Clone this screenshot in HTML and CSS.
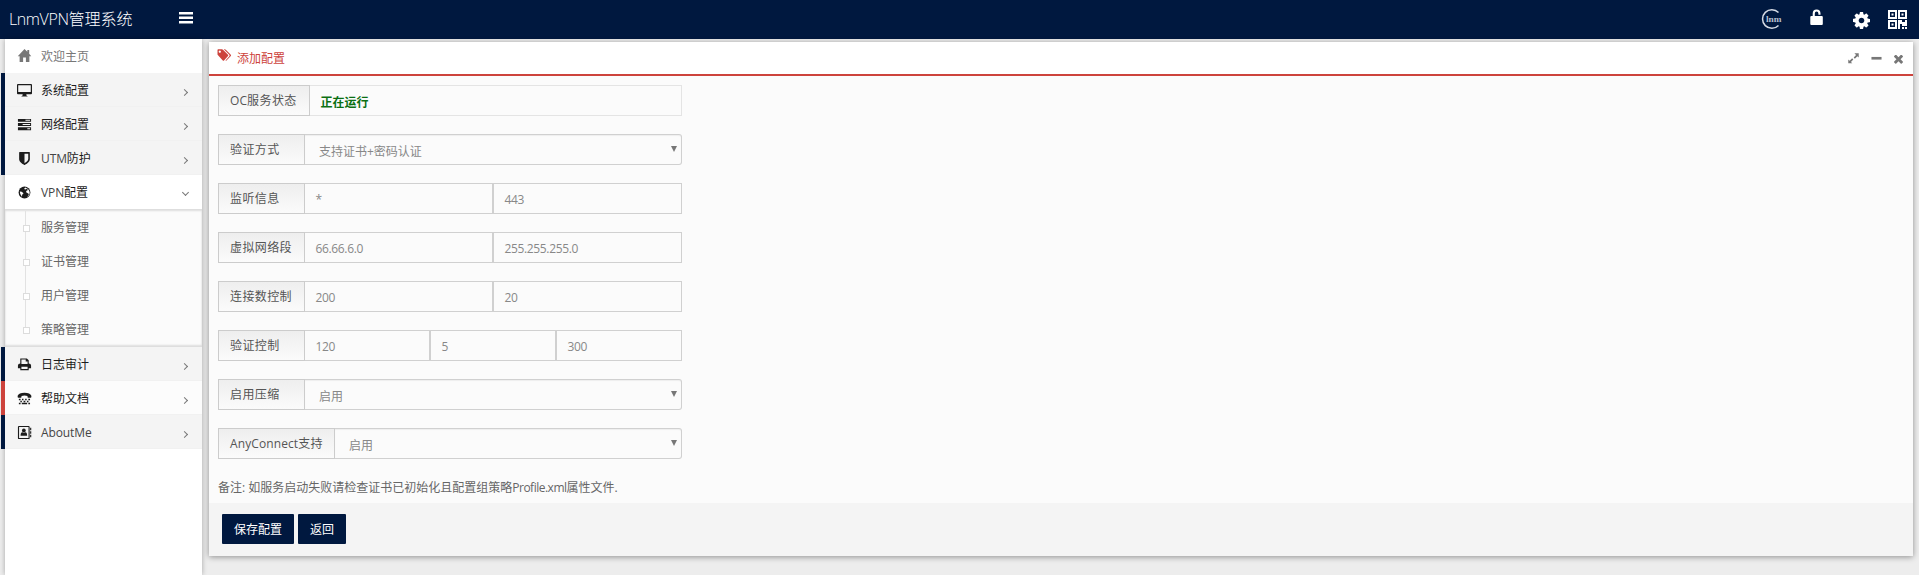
FILE: index.html
```html
<!DOCTYPE html>
<html lang="zh-CN">
<head>
<meta charset="utf-8">
<title>LnmVPN管理系统</title>
<link rel="stylesheet" href="styles.css">
</head>
<body>
<header class="topbar">
  <div class="brand"><span class="brand-latin">LnmVPN</span>管理系统</div>
  <svg class="bars" viewBox="0 0 14 12"><path d="M0 0h14v2.600H0zM0 4.500h14v2.600H0zM0 9h14v2.600H0z"/></svg>
  <nav class="tools">
    <svg class="logo" viewBox="0 0 20 20"><path d="M16.500 3.500A9.300 9.300 0 1 0 16.500 16.500" fill="none" stroke="#d5dae4" stroke-width="1.500"/><text class="logo-text" x="4" y="13" textLength="15.500" lengthAdjust="spacingAndGlyphs">lnm</text></svg>
    <svg class="lock" viewBox="0 0 13 16"><path d="M1.300 7h1.400V4.400a3.900 3.900 0 0 1 7.800 0v1.400H8.400V4.400a1.800 1.800 0 0 0-3.600 0V7h7q1 0 1 1v7q0 1-1 1H1.300q-1 0-1-1V8q0-1 1-1z"/></svg>
    <svg class="gear" viewBox="128 128 1536 1536"><path d="M1152 896q0-106-75-181t-181-75-181 75-75 181 75 181 181 75 181-75 75-181zm512-109v222q0 12-8 23t-20 13l-185 28q-19 54-39 91 35 50 107 138 10 12 10 25t-9 23q-27 37-99 108t-94 71q-12 0-26-9l-138-108q-44 23-91 38-16 136-29 186-7 28-36 28h-222q-14 0-24.500-8.500t-11.500-21.500l-28-184q-49-16-90-37l-141 107q-10 9-25 9-14 0-25-11-126-114-165-168-7-10-7-23 0-12 8-23 15-21 51-66.500t54-70.500q-27-50-41-99l-183-27q-13-2-21-12.500t-8-23.500v-222q0-12 8-23t19-13l186-28q14-46 39-92-40-57-107-138-10-12-10-24 0-10 9-23 26-36 98.500-107.500t94.500-71.500q13 0 26 10l138 107q44-23 91-38 16-136 29-186 7-28 36-28h222q14 0 24.500 8.500t11.500 21.500l28 184q49 16 90 37l142-107q9-9 24-9 13 0 25 10 129 119 165 170 7 8 7 22 0 12-8 23-15 21-51 66.500t-54 70.500q26 50 41 98l183 28q13 2 21 12.500t8 23.500z"/></svg>
    <svg class="qr" viewBox="0 0 19 19"><path fill-rule="evenodd" d="M0 0h9v9H0zM2 2v5h5V2zM3.500 3.500h2v2h-2zM10 0h9v9h-9zM12 2v5h5V2zM13.500 3.500h2v2h-2zM0 10h9v9H0zM2 12v5h5v-5zM3.500 13.500h2v2h-2zM10 10h4v2h3v-2h2v6h-5v-2h-2v5h-2zM14 17h2v2h-2zM17 17h2v2h-2z"/></svg>
  </nav>
</header>
<div class="page">
  <aside class="sidebar">
    <a class="item home"><svg class="ico" viewBox="0 0 16 16"><path d="M8 1 .8 8.700h2V15h3.700v-5h3v5h3.700V8.700h2L13 6.200V2h-2v2z"/></svg><span>欢迎主页</span></a>
    <a class="item nav"><svg class="ico" viewBox="0 0 16 16"><path fill-rule="evenodd" d="M1 1h14q1 0 1 1v9q0 1-1 1h-5v1.200l1.300.8v.5H4.700V14l1.300-.8V12H1q-1 0-1-1V2q0-1 1-1zM1.300 2.300v7.200h13.400V2.300z"/></svg><span>系统配置</span><i class="arrow"></i></a>
    <a class="item nav"><svg class="ico" viewBox="0 0 16 16"><path fill-rule="evenodd" d="M1 2h14v3H1zM9 3v1h5V3zM1 6.500h14v3H1zM6 7.500v1h8v-1zM1 11h14v3H1zM11 12v1h3v-1z"/></svg><span>网络配置</span><i class="arrow"></i></a>
    <a class="item nav"><svg class="ico" viewBox="0 0 1792 1792"><path d="M1344 960v-640h-448v1137q119-63 213-137 235-184 235-360zm192-768v768q0 86-33.500 170.500t-83 150-118 127.500-126.500 103-121 77.500-89.500 49.500-42.500 20q-12 6-26 6t-26-6q-16-7-42.500-20t-89.500-49.500-121-77.500-126.500-103-118-127.500-83-150-33.500-170.500v-768q0-26 19-45t45-19h1152q26 0 45 19t19 45z"/></svg><span><span class="latin">UTM</span>防护</span><i class="arrow"></i></a>
    <a class="item nav open"><svg class="ico" viewBox="0 0 16 16"><circle cx="8" cy="8" r="6.300"/><path fill="#fff" d="M8.800 2.600 7.500 4.200 9 4.800l1-.9 2 1.500-1.500.5-1 1.600 2 1.200 1.200 1-.7 1.800-1.500 1.700q3-1.400 3-5.200-.3-3.800-4.700-5.400zM3 7l2 .3 2 1.500-1.500 1.500-.2 2.200Q3 10.500 3 7z"/></svg><span><span class="latin">VPN</span>配置</span><i class="arrow down"></i></a>
    <div class="submenu">
      <a class="sub">服务管理</a>
      <a class="sub">证书管理</a>
      <a class="sub">用户管理</a>
      <a class="sub">策略管理</a>
    </div>
    <a class="item nav"><svg class="ico" viewBox="0 0 16 16"><path fill-rule="evenodd" d="M3.500 1.500h7l2 2V7q2.500 0 2.500 2v3h-2.500v2h-9v-2H1V9q0-2 2.500-2zM4.700 2.700v4.800h6.600V4.700H9.300v-2zM4.700 10.500v2.300h6.600v-2.300z"/></svg><span>日志审计</span><i class="arrow"></i></a>
    <a class="item nav active"><svg class="ico" viewBox="0 0 16 16"><path d="M.7 6.500V5q1.300-3.200 7.300-3.200T15.300 5v1.500q0 .7-.8.700H12q-.8 0-.8-.7V5.200Q8 4.300 4.800 5.200v1.300q0 .7-.8.700H1.500q-.8 0-.8-.7zM2 8.300h1.800v1.500H2zM5.300 8.300h1.600v1.500H5.300zM8.700 8.300h1.600v1.500H8.700zM12.100 8.300h1.800v1.500h-1.800zM3.600 10.500h1.600v1.400H3.600zM7 10.500h1.900v1.400H7zM10.600 10.500h1.600v1.400h-1.600zM2 12.600h1.800V14H2zM5.100 12.600h5.700V14H5.100zM12.100 12.600h1.800V14h-1.800z"/></svg><span>帮助文档</span><i class="arrow"></i></a>
    <a class="item nav"><svg class="ico" viewBox="0 0 16 16"><path fill-rule="evenodd" d="M2 1h10.500q1 0 1 1v12q0 1-1 1H2q-1 0-1-1V2q0-1 1-1zM2.200 2.200v11.600h10.100V2.200zM14 3h1.200v2.500H14zM14 6.700h1.200v2.500H14zM14 10.500h1.200V13H14z"/><circle cx="7.300" cy="5.800" r="2"/><path d="M3.800 11.500q0-3.700 2-3.700 1.500.7 3 0 2 0 2 3.700z"/></svg><span class="latin">AboutMe</span><i class="arrow"></i></a>
  </aside>
  <main class="panel">
    <div class="panel-head">
      <svg class="tags" viewBox="0 0 15 13"><path fill-rule="evenodd" d="M.5 1q0-.7.700-.7H5q.6 0 1 .4l5 5q.6.600 0 1.200l-4 4.500q-.6.500-1.200 0l-5-5.400Q.5 5.700.5 5.200zM2.800 1.500a1.100 1.100 0 1 0 .01 0z"/><path d="M6.800.3h1q.6 0 1 .4l5 5q.6.600 0 1.200l-4.300 4.600q-.6.400-1-.1l3.800-4.200q.7-.7 0-1.400z"/></svg>
      <h1>添加配置</h1>
      <div class="controls">
        <svg viewBox="0 0 12 12"><path d="M7 .3h4.700V5L10.200 3.500 7.500 6.200l-1.300-1.300 2.600-2.700zM.3 7l1.500 1.500 2.700-2.700 1.300 1.300-2.600 2.700 1.500 1.500H.3z"/></svg>
        <svg viewBox="0 0 12 12"><path d="M.5 4.300h11v2.900H.5z"/></svg>
        <svg viewBox="300 362 1192 1192"><path d="M1490 1284q0 40-28 68l-136 136q-28 28-68 28t-68-28l-294-294-294 294q-28 28-68 28t-68-28l-136-136q-28-28-28-68t28-68l294-294-294-294q-28-28-28-68t28-68l136-136q28-28 68-28t68 28l294 294 294-294q28-28 68-28t68 28l136 136q28 28 28 68t-28 68l-294 294 294 294q28 28 28 68z"/></svg>
      </div>
    </div>
    <form class="panel-body">
      <div class="group status"><label class="wide"><span class="any">OC</span>服务状态</label><div class="field"><b>正在运行</b></div></div>
      <div class="group"><label>验证方式</label><div class="field select">支持证书+密码认证</div></div>
      <div class="group"><label>监听信息</label><div class="field">*</div><div class="field">443</div></div>
      <div class="group"><label>虚拟网络段</label><div class="field">66.66.6.0</div><div class="field">255.255.255.0</div></div>
      <div class="group"><label>连接数控制</label><div class="field">200</div><div class="field">20</div></div>
      <div class="group"><label>验证控制</label><div class="field">120</div><div class="field">5</div><div class="field">300</div></div>
      <div class="group"><label>启用压缩</label><div class="field select">启用</div></div>
      <div class="group"><label class="widest"><span class="any">AnyConnect</span>支持</label><div class="field select">启用</div></div>
      <p class="note">备注: 如服务启动失败请检查证书已初始化且配置组策略<span class="file">Profile.xml</span>属性文件.</p>
    </form>
    <footer class="panel-foot"><span class="btn">保存配置</span><span class="btn">返回</span></footer>
  </main>
</div>
</body>
</html>
```

FILE: styles.css
```css
* { box-sizing: border-box; }
body {
  margin: 0;
  height: 575px;
  overflow: hidden;
  background: #ededed;
  font: 12px/18px "Open Sans", "Noto Sans CJK SC", sans-serif;
  color: #666;
}
svg { display: block; flex: none; fill: currentColor; }
.topbar {
  display: flex;
  align-items: center;
  height: 39px;
  padding: 0 11px 0 9px;
  background: #00183f;
  color: #fff;
}
.brand { width: 170px; padding-bottom: 2px; font-size: 16px; font-weight: 300; line-height: 24px; white-space: nowrap; }
.brand-latin { letter-spacing: -.4px; }
.bars { width: 14px; height: 12px; margin-bottom: 4px; }
.tools { display: flex; margin-left: auto; height: 39px; }
.logo { width: 20px; height: 20px; margin: 9px 28px 0 0; overflow: visible; }
.logo-text { font: bold 8px "Liberation Serif", serif; fill: #b8c0d0; }
.lock { width: 13px; height: 16px; margin: 9px 30px 0 0; }
.gear { width: 17px; height: 17px; margin: 12px 18px 0 0; }
.qr { width: 19px; height: 19px; margin: 10px 1px 0 0; }
.page { display: flex; align-items: flex-start; height: 536px; }
.sidebar {
  width: 197px;
  height: 536px;
  margin-left: 5px;
  background: #fff;
  box-shadow: 0 0 5px rgba(0, 0, 0, .3);
}
.item { display: flex; align-items: center; height: 34px; padding: 2px 14px 0 12px; color: #1c1c1c; }
.home { padding-top: 1px; color: #777; }
.nav { margin-left: -4px; border-left: 4px solid #00183f; background: #f4f4f4; box-shadow: inset 0 -1px #f1f1f1; }
.open { border-left-color: transparent; background: #fff padding-box; box-shadow: none; }
.active { border-left-color: #cd433c; background: #fcfcfc; }
.ico { width: 15px; height: 15px; margin: 0 9px 2px 0; }
.latin { color: #444; letter-spacing: -.1px; }
.arrow { width: 5px; height: 5px; margin: 2px 1px 0 auto; border: solid #777; border-width: 1px 1px 0 0; transform: rotate(45deg); }
.down { margin-top: -1px; margin-right: 0; transform: rotate(135deg); }
.submenu {
  position: relative;
  height: 138px;
  padding-top: 1px;
  background: #fbfbfb;
  box-shadow: inset 0 2px 2px #ddd, inset 0 -2px 2px #ddd;
}
.submenu::before { content: ""; position: absolute; left: 20px; top: 2px; height: 119px; border-left: 1px solid #e2e2e2; }
.sub { position: relative; display: block; height: 34px; padding-left: 36px; line-height: 35px; }
.sub::before { content: ""; position: absolute; left: 18px; top: 15px; width: 5px; height: 5px; border: 1px solid #dcdcdc; background: #fff; }
.panel {
  width: 1704px;
  height: 514px;
  margin: 3px 0 0 7px;
  background: #fbfbfb;
  box-shadow: 0 1px 6px rgba(0, 0, 0, .4);
}
.panel-head { display: flex; height: 34px; padding: 0 10px 0 8px; border-bottom: 2px solid #cd433c; background: #fff; color: #cd433c; }
.tags { width: 15px; height: 13px; margin: 7px 5px 0 0; }
h1 { margin: 8px 0 0; font: inherit; }
.controls { display: flex; gap: 12px; margin: 11px 0 0 auto; color: #777; }
.controls svg { width: 11px; height: 11px; }
.controls svg:last-child { width: 9px; height: 9px; margin-top: 2px; }
.panel-body { height: 427px; padding: 9px 9px 0; }
.group { display: flex; width: 464px; height: 31px; margin-bottom: 18px; }
label { width: 87px; height: 31px; padding-left: 11px; border: 1px solid #ccc; background: linear-gradient(#eee, #fbfbfb); color: #555; line-height: 30px; letter-spacing: .4px; white-space: nowrap; }
.wide { width: 92px; }
.widest { width: 117px; }
.any { letter-spacing: .1px; }
.field { position: relative; flex: 1; padding-left: 10.500px; border: 1px solid #d0d0d0; border-left-width: 0; color: #888; line-height: 32px; letter-spacing: -.35px; }
.field + .field { border-left-width: 1px; }
.status .field { border-color: #e4e4e4; line-height: 34px; letter-spacing: 0; }
.status b { color: #0b7013; }
.select { padding-left: 14px; border-radius: 0 3px 3px 0; box-shadow: inset 0 1px 1px #eee; line-height: 34px; letter-spacing: 0; }
.select::after { content: ""; position: absolute; right: 4px; top: 11px; border: solid transparent; border-width: 6px 3px 0; border-top-color: #777; }
.note { margin: 0; line-height: 21px; white-space: nowrap; }
.file { letter-spacing: -.5px; }
.panel-foot { display: flex; gap: 4px; height: 53px; padding: 11px 13px; background: #f4f4f4; }
.btn { height: 30px; padding: 0 12px; border-radius: 1px; background: #00183f; color: #fff; line-height: 31px; }
```
